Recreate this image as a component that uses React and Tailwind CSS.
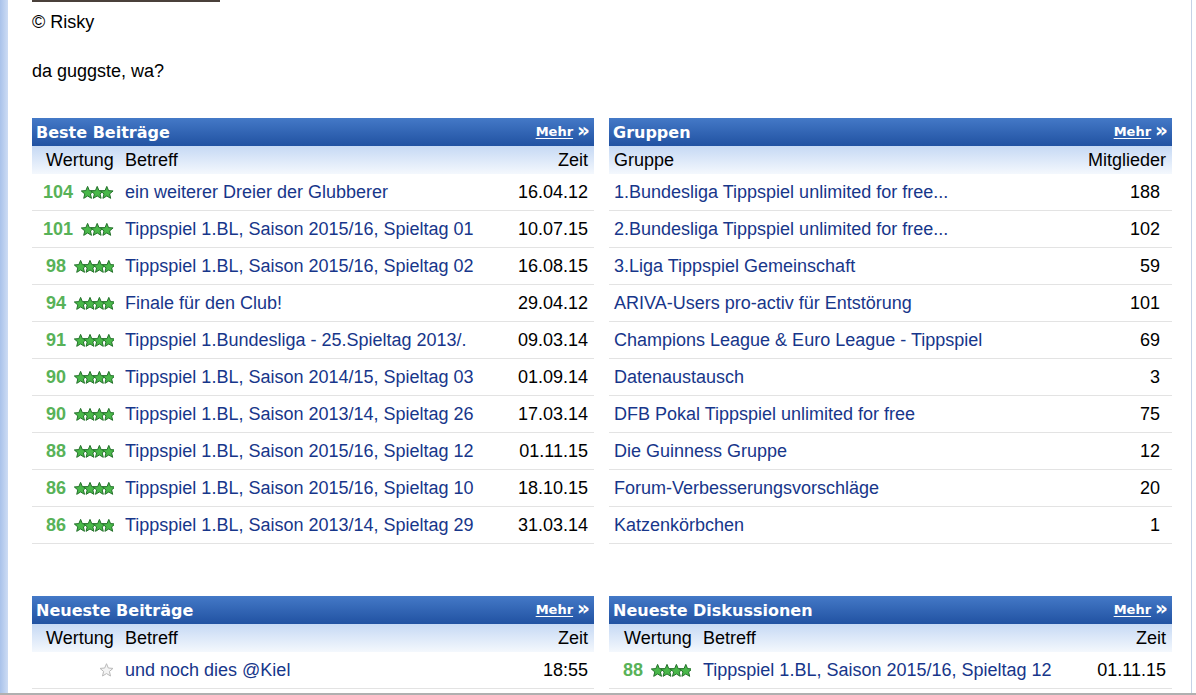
import React from "react";

const best = [
  [104, 3, "ein weiterer Dreier der Glubberer", "16.04.12"],
  [101, 3, "Tippspiel 1.BL, Saison 2015/16, Spieltag 01", "10.07.15"],
  [98, 4, "Tippspiel 1.BL, Saison 2015/16, Spieltag 02", "16.08.15"],
  [94, 4, "Finale für den Club!", "29.04.12"],
  [91, 4, "Tippspiel 1.Bundesliga - 25.Spieltag 2013/.", "09.03.14"],
  [90, 4, "Tippspiel 1.BL, Saison 2014/15, Spieltag 03", "01.09.14"],
  [90, 4, "Tippspiel 1.BL, Saison 2013/14, Spieltag 26", "17.03.14"],
  [88, 4, "Tippspiel 1.BL, Saison 2015/16, Spieltag 12", "01.11.15"],
  [86, 4, "Tippspiel 1.BL, Saison 2015/16, Spieltag 10", "18.10.15"],
  [86, 4, "Tippspiel 1.BL, Saison 2013/14, Spieltag 29", "31.03.14"],
];

const groups = [
  ["1.Bundesliga Tippspiel unlimited for free...", 188],
  ["2.Bundesliga Tippspiel unlimited for free...", 102],
  ["3.Liga Tippspiel Gemeinschaft", 59],
  ["ARIVA-Users pro-activ für Entstörung", 101],
  ["Champions League & Euro League - Tippspiel", 69],
  ["Datenaustausch", 3],
  ["DFB Pokal Tippspiel unlimited for free", 75],
  ["Die Guinness Gruppe", 12],
  ["Forum-Verbesserungsvorschläge", 20],
  ["Katzenkörbchen", 1],
];

const starPts = (cx, cy, r) => {
  const pts = [];
  for (let i = 0; i < 10; i++) {
    const rad = i % 2 === 0 ? r : r * 0.45;
    const a = (Math.PI / 5) * i - Math.PI / 2;
    pts.push(`${(cx + rad * Math.cos(a)).toFixed(2)},${(cy + rad * Math.sin(a)).toFixed(2)}`);
  }
  return pts.join(" ");
};

// little green rating stars
const Stars = ({ count }) => {
  const step = count === 3 ? 9.6 : 9.4;
  const w = count === 3 ? 33 : 40;
  return (
    <svg width={w} height="15" viewBox={`0 0 ${w} 15`} className="shrink-0">
      {Array.from({ length: count }).map((_, i) => (
        <polygon
          key={i}
          points={starPts(6.6 + i * step, 8, 6.6)}
          fill="#49b849"
          stroke="#23702a"
          strokeWidth="1"
          strokeLinejoin="round"
        />
      ))}
    </svg>
  );
};

const GrayStar = () => (
  <svg width="15" height="14" viewBox="0 0 15 14" className="shrink-0">
    <polygon points={starPts(7.5, 7.5, 6.8)} fill="#f4f4f4" stroke="#b9b9b9" strokeWidth="1" />
  </svg>
);

const Panel = ({ title, children }) => (
  <div>
    <div className="h-[28px] flex items-center justify-between pl-[4px] pr-[4px] bg-gradient-to-b from-[#4479c7] to-[#2152a2] text-white font-['DejaVu_Sans',sans-serif] font-bold">
      <span className="text-[16px] leading-none pt-[1px]">{title}</span>
      <span className="flex items-center gap-[4px] leading-none mb-[2px]">
        <span className="text-[13px] underline underline-offset-2">Mehr</span>
        <span className="text-[20px] leading-none -mt-[3px]">»</span>
      </span>
    </div>
    {children}
  </div>
);

const SubHead = ({ children }) => (
  <div className="h-[28px] flex items-center bg-gradient-to-b from-[#c6d9f4] to-[#f4f8fd] text-black">
    {children}
  </div>
);

const Row = ({ children }) => (
  <div className="h-[37px] flex items-center border-b border-[#e3e3e3]">{children}</div>
);

const Score = ({ value, stars }) => (
  <div className="w-[90px] shrink-0 flex items-center justify-end gap-[8px] pr-[8px]">
    <span className="text-[#58b258] font-bold">{value}</span>
    <Stars count={stars} />
  </div>
);

export default function App() {
  return (
    <div className="h-[695px] w-[1196px] flex flex-col bg-white overflow-hidden font-['Liberation_Sans',Arial,sans-serif] text-[18px] leading-[20px]">
      <div className="flex-1 flex min-h-0">
        <div className="w-[8px] shrink-0 bg-gradient-to-r from-[#a9c2ea] to-[#cddcf4]" />
        <div className="w-[1184px] shrink-0 border-r border-[#c6d2e6] pl-[24px] pr-[20px] overflow-hidden">
          <div className="h-[2px] w-[188px] bg-[#4a403a]" />
          <p className="mt-[10px]">© Risky</p>
          <p className="mt-[29px]">da guggste, wa?</p>

          <div className="mt-[37px] grid grid-cols-[562px_563px] gap-x-[15px] gap-y-[52px]">
            <Panel title="Beste Beiträge">
              <SubHead>
                <span className="pl-[14px] w-[93px] shrink-0">Wertung</span>
                <span className="flex-1">Betreff</span>
                <span className="pr-[6px]">Zeit</span>
              </SubHead>
              {best.map(([v, s, t, d], i) => (
                <Row key={i}>
                  <Score value={v} stars={s} />
                  <span className="flex-1 pl-[3px] text-[#17368a] whitespace-nowrap">{t}</span>
                  <span className="pr-[6px]">{d}</span>
                </Row>
              ))}
            </Panel>

            <Panel title="Gruppen">
              <SubHead>
                <span className="pl-[5px] flex-1">Gruppe</span>
                <span className="pr-[6px]">Mitglieder</span>
              </SubHead>
              {groups.map(([t, n], i) => (
                <Row key={i}>
                  <span className="flex-1 pl-[5px] text-[#17368a] whitespace-nowrap">{t}</span>
                  <span className="pr-[12px]">{n}</span>
                </Row>
              ))}
            </Panel>

            <Panel title="Neueste Beiträge">
              <SubHead>
                <span className="pl-[14px] w-[93px] shrink-0">Wertung</span>
                <span className="flex-1">Betreff</span>
                <span className="pr-[6px]">Zeit</span>
              </SubHead>
              <Row>
                <div className="w-[90px] shrink-0 flex items-center justify-end pr-[8px]">
                  <GrayStar />
                </div>
                <span className="flex-1 pl-[3px] text-[#17368a]">und noch dies @Kiel</span>
                <span className="pr-[6px]">18:55</span>
              </Row>
            </Panel>

            <Panel title="Neueste Diskussionen">
              <SubHead>
                <span className="pl-[15px] w-[94px] shrink-0">Wertung</span>
                <span className="flex-1">Betreff</span>
                <span className="pr-[6px]">Zeit</span>
              </SubHead>
              <Row>
                <Score value={88} stars={4} />
                <span className="flex-1 pl-[4px] text-[#17368a]">Tippspiel 1.BL, Saison 2015/16, Spieltag 12</span>
                <span className="pr-[6px]">01.11.15</span>
              </Row>
            </Panel>
          </div>
        </div>
        <div className="flex-1 bg-white" />
      </div>
      <div className="h-[2px] bg-[#b0b0b0]" />
    </div>
  );
}
